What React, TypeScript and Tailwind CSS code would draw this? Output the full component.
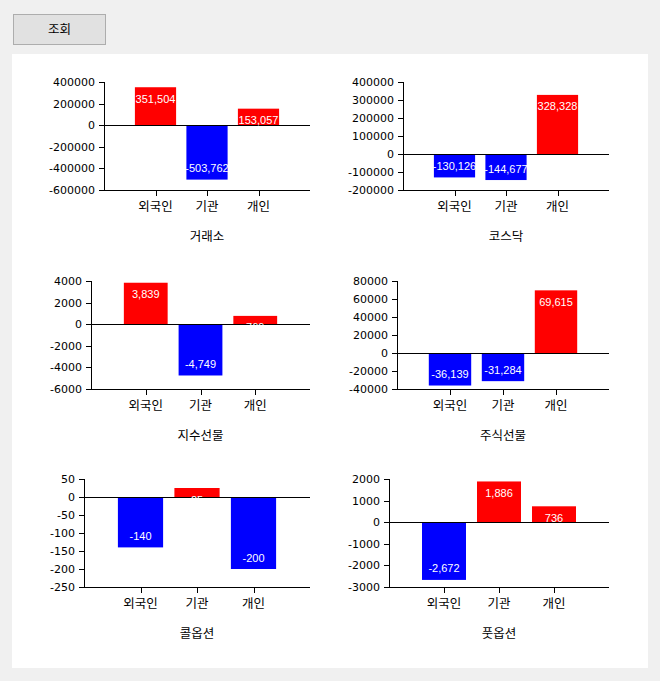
const charts = [
  { title: '거래소', min: -600000, max: 400000, step: 200000, axis: 92, values: [351504, -503762, 153057] },
  { title: '코스닥', min: -200000, max: 400000, step: 100000, axis: 92, values: [-130126, -144677, 328328] },
  { title: '지수선물', min: -6000, max: 4000, step: 2000, axis: 79, values: [3839, -4749, 769] },
  { title: '주식선물', min: -40000, max: 80000, step: 20000, axis: 86, values: [-36139, -31284, 69615] },
  { title: '콜옵션', min: -250, max: 50, step: 50, axis: 72, values: [-140, 25, -200] },
  { title: '풋옵션', min: -3000, max: 2000, step: 1000, axis: 78, values: [-2672, 1886, 736] },
];

const categories = ['외국인', '기관', '개인'];
const KR = '"Noto Sans CJK KR", "DejaVu Sans", sans-serif';

const TOP = 28;
const BOTTOM = 136;
const RIGHT = 298;

function BarChart({ title, min, max, step, axis, values }: (typeof charts)[number]) {
  const y = (v: number) => TOP + ((max - v) / (max - min)) * (BOTTOM - TOP);
  const spacing = (RIGHT - axis) / 4;
  const barW = spacing * 0.8;
  const zero = Math.round(y(0)) + 0.5;
  const ticks: number[] = [];
  for (let v = max; v >= min; v -= step) ticks.push(v);

  return (
    <svg width={299} height={198.5} className="block">
      {/* bars */}
      {values.map((v, i) => {
        const cx = axis + spacing * (i + 1);
        const top = Math.min(y(v), y(0));
        const h = Math.abs(y(v) - y(0));
        return (
          <rect key={i} x={cx - barW / 2} y={top} width={barW} height={h} fill={v >= 0 ? '#ff0000' : '#0000ff'} />
        );
      })}

      {/* axes */}
      <g stroke="#000" strokeWidth={1} shapeRendering="crispEdges">
        <line x1={axis + 0.5} y1={TOP} x2={axis + 0.5} y2={BOTTOM + 0.5} />
        <line x1={axis} y1={BOTTOM + 0.5} x2={RIGHT} y2={BOTTOM + 0.5} />
        <line x1={axis} y1={zero} x2={RIGHT} y2={zero} />
        {ticks.map((t) => (
          <line key={t} x1={axis - 5} y1={Math.round(y(t)) + 0.5} x2={axis} y2={Math.round(y(t)) + 0.5} />
        ))}
        {categories.map((_, i) => {
          const cx = Math.round(axis + spacing * (i + 1)) + 0.5;
          return <line key={i} x1={cx} y1={BOTTOM} x2={cx} y2={BOTTOM + 6} />;
        })}
      </g>

      {/* y labels */}
      {ticks.map((t) => (
        <text
          key={t}
          x={axis - 9}
          y={y(t) + 4}
          textAnchor="end"
          fontSize={11}
          fontFamily='"DejaVu Sans", sans-serif'
          fill="#000"
        >
          {t}
        </text>
      ))}

      {/* value labels */}
      {values.map((v, i) => {
        const cx = axis + spacing * (i + 1);
        const ly = v >= 0 ? y(v) + 15.5 : y(v) - 7.5;
        return (
          <text
            key={i}
            x={cx}
            y={ly}
            textAnchor="middle"
            fontSize={11}
            fontFamily='"Liberation Sans", Arial, sans-serif'
            fill="#fff"
          >
            {v.toLocaleString('en-US')}
          </text>
        );
      })}

      {/* categories */}
      {categories.map((c, i) => (
        <text
          key={c}
          x={axis + spacing * (i + 1)}
          y={156.5}
          textAnchor="middle"
          fontSize={12.5}
          fontFamily={KR}
          fill="#000"
        >
          {c}
        </text>
      ))}

      <text x={(axis + RIGHT) / 2} y={186.5} textAnchor="middle" fontSize={12.5} fontFamily={KR} fill="#000">
        {title}
      </text>
    </svg>
  );
}

export default function App() {
  return (
    <div className="min-h-[681px] w-[660px] bg-[#f0f0f0] pt-[14px]" style={{ fontFamily: KR }}>
      <button className="ml-[13px] flex h-[31px] w-[93px] items-center justify-center border border-[#adadad] bg-[#e1e1e1] text-[12.5px] text-black">
        조회
      </button>
      <div className="ml-[12px] mt-[9px] h-[614px] w-[636px] bg-white">
        <div className="grid grid-cols-[299px_299px]">
          {charts.map((c) => (
            <BarChart key={c.title} {...c} />
          ))}
        </div>
      </div>
    </div>
  );
}
